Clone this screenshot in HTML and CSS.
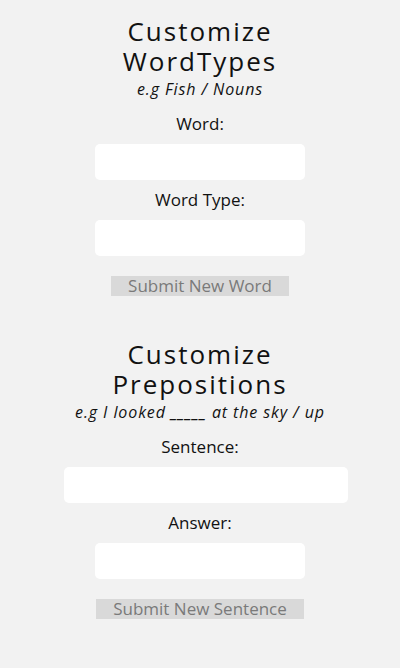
FILE: index.html
```html
<!DOCTYPE html>
<html lang="en">
<head>
<meta charset="utf-8">
<title>Customize</title>
<link rel="stylesheet" href="styles.css">
</head>
<body>
<main class="page">
  <section class="panel">
    <h2 class="title">Customize<br>WordTypes</h2>
    <p class="example">e.g Fish / Nouns</p>
    <label class="label" for="word">Word:</label>
    <input class="field" id="word" type="text">
    <label class="label" for="wtype">Word Type:</label>
    <input class="field" id="wtype" type="text">
    <button class="submit" type="button">Submit New Word</button>
  </section>
  <section class="panel panel-second">
    <h2 class="title">Customize<br>Prepositions</h2>
    <p class="example">e.g I looked _____ at the sky / up</p>
    <label class="label" for="sentence">Sentence:</label>
    <input class="field field-wide" id="sentence" type="text">
    <label class="label" for="answer">Answer:</label>
    <input class="field" id="answer" type="text">
    <button class="submit" type="button">Submit New Sentence</button>
  </section>
</main>
</body>
</html>
```
FILE: styles.css
```css
html, body {
  margin: 0;
  padding: 0;
  background: #f2f2f2;
}
body {
  font-family: "Open Sans", "DejaVu Sans", sans-serif;
  color: #111;
}
.page {
  display: flex;
  flex-direction: column;
  align-items: center;
  padding-top: 16px;
}
.panel {
  display: flex;
  flex-direction: column;
  align-items: center;
}
.panel-second {
  margin-top: 43px;
}
.title {
  margin: 0;
  font-size: 26px;
  line-height: 30px;
  font-weight: 500;
  letter-spacing: 2px;
  text-align: center;
  color: #111;
}
.example {
  margin: 2px 0 4px;
  font-size: 16px;
  line-height: 22px;
  font-style: italic;
  letter-spacing: 0.9px;
  color: #111;
}
.label {
  display: block;
  margin: 8px 0 9px;
  font-size: 17px;
  line-height: 23px;
}
.field {
  display: block;
  box-sizing: border-box;
  width: 210px;
  height: 36px;
  border: none;
  border-radius: 5px;
  background: #fff;
  padding: 0 8px;
  font: inherit;
  outline: none;
}
.field-wide {
  width: 284px;
  margin-left: 12px;
}
.submit {
  margin-top: 20px;
  height: 20px;
  padding: 0 17px;
  border: none;
  border-radius: 0;
  background: #d9d9d9;
  color: #7a7a7a;
  font-family: inherit;
  font-size: 17px;
  line-height: 20px;
}
```
